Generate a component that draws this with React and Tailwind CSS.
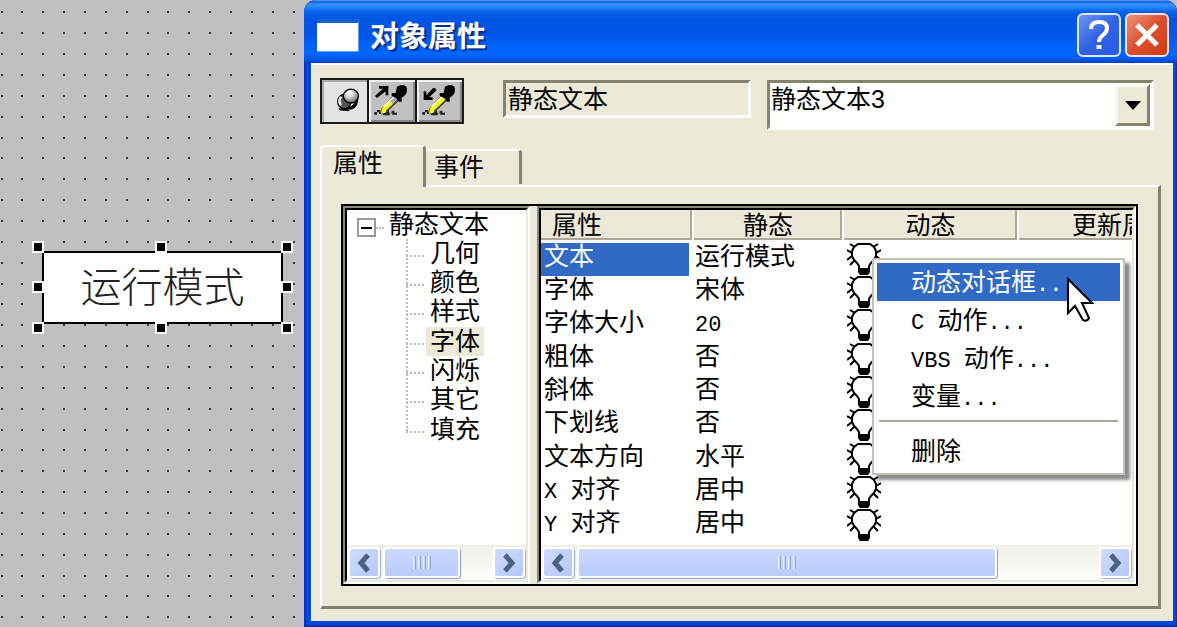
import { useState } from 'react';
import clsx from 'clsx';

const TREE_ITEMS = ['几何', '颜色', '样式', '字体', '闪烁', '其它', '填充'];

const ROWS = [
  ['文本', '运行模式'],
  ['字体', '宋体'],
  ['字体大小', '20'],
  ['粗体', '否'],
  ['斜体', '否'],
  ['下划线', '否'],
  ['文本方向', '水平'],
  ['X 对齐', '居中'],
  ['Y 对齐', '居中'],
];

const MENU_ITEMS = ['动态对话框...', 'C 动作...', 'VBS 动作...', '变量...'];

// latin runs are about half the width of a chinese character
function Mixed({ text }) {
  return text.split(/([\x20-\x7e]+)/).filter(Boolean).map((part, i) =>
    /^[\x20-\x7e]/.test(part) ? (
      <span key={i} className="whitespace-pre font-['Liberation_Mono',monospace] text-[22px]">{part}</span>
    ) : (
      <span key={i}>{part}</span>
    )
  );
}

function BulbIcon() {
  return (
    <svg width="34" height="32" viewBox="0 0 34 32" fill="none" stroke="#000" strokeWidth="2" aria-hidden="true">
      <path d="M11 1H23L27 4L29 8V13L27 17L24 20L22 23V26H12V23L10 20L7 17L5 13V8L7 4Z" fill="#fff" />
      <path d="M3 1L8 4M0 7L5 10M5 13L0 17M8 17L3 22M31 1L26 4M34 7L29 10M29 13L34 17M26 17L31 22" />
      <path d="M11 25h12v4l-2 3h-8l-2-3z" fill="#000" stroke="none" />
    </svg>
  );
}

function PinIcon() {
  return (
    <svg width="46" height="42" viewBox="0 0 138 126" aria-hidden="true">
      <defs>
        <radialGradient id="ball" cx="0.4" cy="0.3" r="0.7">
          <stop offset="0.1" stopColor="#fff" />
          <stop offset="0.5" stopColor="#c4c4c4" />
          <stop offset="1" stopColor="#666" />
        </radialGradient>
      </defs>
      <path d="M50 86l16-2 20 6-6 4-24-2z" fill="#111" />
      <ellipse cx="68" cy="65" rx="20" ry="22" fill="#555" stroke="#000" strokeWidth="4" />
      <path d="M58 50q-10 12 0 26" stroke="#e4e4e4" strokeWidth="8" fill="none" />
      <path d="M70 84q18 2 34-20l6-16q4 36-22 42z" fill="#000" />
      <ellipse cx="88" cy="48" rx="23" ry="21" fill="url(#ball)" stroke="#000" strokeWidth="4" />
    </svg>
  );
}

function DropperIcon({ down }) {
  return (
    <svg width="45" height="42" viewBox="0 0 135 126" aria-hidden="true">
      {down ? (
        <path d="M53 24l6 6-22 22h10v8H20V34h8v12l20-22z" fill="#000" />
      ) : (
        <path d="M30 18h28v28h-8V34L24 54l-6-6 24-22H30z" fill="#000" />
      )}
      <path d="M16 96h8v-6h10v6h8v6H30v-5h-6v7h-8zM42 98h10v-8h8v8h8v-6h8v6h8v6H70v-4h-8v6H42z" fill="#222" />
      <path d="M76 44l16 14-42 40-14 4 2-16z" fill={down ? '#ffff22' : '#aaa'} stroke="#222" strokeWidth="3" />
      <path d="M60 60l14 14-26 24-12 4 2-16z" fill="#f8f815" />
      <path d="M76 48L44 80" stroke="#fff" strokeWidth="4" />
      <path d="M90 57L52 94" stroke="#444" strokeWidth="4" />
      <path d="M84 20q8-6 18-5 12 2 12 14 0 12-10 20l-6 4v12h-8l-8-10-14-8v-8h12z" fill="#000" />
    </svg>
  );
}

function ToolButton({ label, pressed, children }) {
  return (
    <button
      type="button"
      aria-label={label}
      aria-pressed={pressed}
      className={clsx(
        'flex flex-1 items-center justify-center overflow-hidden',
        pressed
          ? 'bg-[#e4e4e4] shadow-[inset_2px_2px_0_#aaa]'
          : 'bg-[#c0c0c0] shadow-[inset_2px_2px_0_#f0f0f0,inset_-2px_-2px_0_#858585]'
      )}
    >
      {children}
    </button>
  );
}

function ScrollArrow({ left }) {
  return (
    <button
      type="button"
      aria-label={left ? '向左' : '向右'}
      className="flex h-[31px] w-[32px] shrink-0 items-center justify-center rounded-[4px] border-2 border-white bg-linear-to-br from-[#d0dcfe] to-[#b3c7f6] shadow-[1px_1px_1px_#8fa8d8]"
    >
      <svg width="14" height="20" viewBox="0 0 14 20" fill="none" stroke="#4d6185" strokeWidth="5" aria-hidden="true">
        <path d={left ? 'M11 2L4 10l7 8' : 'M3 2l7 8-7 8'} />
      </svg>
    </button>
  );
}

function ScrollBar({ thumb }) {
  return (
    <div className="flex h-[35px] shrink-0 items-center gap-[3px] bg-linear-to-b from-[#f0efe8] to-[#fefefb] px-[1px]">
      <ScrollArrow left />
      <div className="flex-1">
        <div className={clsx('flex h-[31px] items-center justify-center gap-[2px] rounded-[4px] border-2 border-white bg-linear-to-b from-[#cbd8ff] to-[#b9cbf9] shadow-[1px_1px_1px_#7f9bd0]', thumb)}>
          {[0, 1, 2, 3].map((i) => (
            <span key={i} className="h-[13px] w-[3px] border-r border-l border-r-[#8caae6] border-l-[#eef4fe]" />
          ))}
        </div>
      </div>
      <ScrollArrow />
    </div>
  );
}

// grid dots of the drawing area
function GridDots() {
  const dots = [];
  for (let row = 0; row < 60; row++) {
    for (let col = 0; col < 15; col++) {
      dots.push(<rect key={`${row}-${col}`} x={Math.round(0.6 + col * 20.86)} y={Math.round(11.4 + row * 20.86)} width="2" height="2" />);
    }
  }
  return (
    <svg className="absolute inset-0 h-full w-full" fill="#3a3a3a" aria-hidden="true">
      {dots}
    </svg>
  );
}

const HANDLES = [
  'left-[-12px] top-[-12px]',
  'left-[111px] top-[-12px]',
  'right-[-12px] top-[-12px]',
  'left-[-12px] top-[28px]',
  'right-[-12px] top-[28px]',
  'left-[-12px] bottom-[-12px]',
  'left-[111px] bottom-[-12px]',
  'right-[-12px] bottom-[-12px]',
];

function Canvas() {
  return (
    <div className="relative w-[304px] shrink-0 overflow-hidden">
      <GridDots />
      <div className="absolute top-[251px] left-[42px] flex h-[73px] w-[241px] items-center justify-center border-2 border-black bg-white">
        <span className="text-[41px] leading-[60px] font-light text-[#222]">运行模式</span>
        {HANDLES.map((pos) => (
          <span key={pos} className={clsx('absolute h-[12px] w-[12px] border-2 border-white bg-black', pos)} />
        ))}
      </div>
    </div>
  );
}

function TitleBar() {
  return (
    <header className="flex h-[63px] shrink-0 items-center rounded-t-[12px] bg-[linear-gradient(180deg,#6f9be8_0px,#0a5fe0_2px,#3a94ff_4px,#2585fb_7px,#0560ea_12px,#0054e3_20px,#0056e8_36px,#0064fc_46px,#0066ff_54px,#0058ee_59px,#0040c8_63px)] pt-[7px] pr-[8px] pl-[13px]">
      <span className="h-[33px] w-[42px] border-t-4 border-r border-b border-t-[#1262c8] border-r-[#5f9cf0] border-b-[#5f9cf0] bg-white" />
      <h1 className="flex-1 pt-[4px] pl-[11px] text-[29px] leading-[40px] font-bold text-white [text-shadow:2px_2px_1px_#0a2f8a]">对象属性</h1>
      <div className="flex gap-[4px]">
        <button
          type="button"
          aria-label="帮助"
          className="flex h-[44px] w-[44px] items-center justify-center rounded-[6px] border-2 border-[#dfe8ff] bg-linear-to-br from-[#6f95f3] via-[#3063e4] to-[#2a5ce8]"
        >
          <svg width="24" height="30" viewBox="0 0 24 30" fill="none" stroke="#fff" strokeWidth="4" aria-hidden="true">
            <path d="M4 9q0-7 8-7 8 0 8 6 0 4-4 7-4 3-4 7" />
            <path d="M12 25v4" strokeWidth="5" />
          </svg>
        </button>
        <button
          type="button"
          aria-label="关闭"
          className="flex h-[44px] w-[44px] items-center justify-center rounded-[6px] border-2 border-[#f5e2e4] bg-linear-to-br from-[#ec9078] via-[#dd4f2c] to-[#cf3c10]"
        >
          <svg width="26" height="26" viewBox="0 0 26 26" stroke="#fff" strokeWidth="5" aria-hidden="true">
            <path d="M3 3l20 20M23 3L3 23" />
          </svg>
        </button>
      </div>
    </header>
  );
}

function Toolbar() {
  return (
    <div className="mr-[7px] flex h-[52px] items-start">
      <div className="flex h-[46px] w-[144px] shrink-0 gap-[2px] bg-[#1c1c1c] p-[2px]">
        <ToolButton label="固定" pressed><PinIcon /></ToolButton>
        <ToolButton label="复制属性"><DropperIcon /></ToolButton>
        <ToolButton label="分配属性"><DropperIcon down /></ToolButton>
      </div>
      <input
        readOnly
        aria-label="对象类型"
        value="静态文本"
        className="mt-[2px] ml-[39px] h-[38px] w-[248px] shrink-0 border-3 border-t-[#85836f] border-r-white border-b-white border-l-[#85836f] bg-[#ece9d8] pb-[4px] pl-[2px] text-[25px] leading-[28px] outline-none"
      />
      <div className="relative mt-[2px] ml-[16px] h-[50px] min-w-0 flex-1">
        <select
          aria-label="对象名称"
          className="h-full w-full appearance-none border-3 border-t-[#85836f] border-r-white border-b-white border-l-[#85836f] bg-white pb-[12px] pl-[1px] text-[25px] leading-[32px] outline-none"
        >
          <option>静态文本3</option>
        </select>
        <span className="pointer-events-none absolute top-[4px] right-[4px] flex h-[42px] w-[35px] items-center justify-center border-3 border-t-[#f8f7f0] border-r-[#85836f] border-b-[#85836f] border-l-[#f8f7f0] bg-[#ece9d8]">
          <svg width="16" height="9" viewBox="0 0 16 9" aria-hidden="true"><path d="M0 0h16L8 9z" /></svg>
        </span>
      </div>
    </div>
  );
}

const paneClass = 'flex flex-col overflow-hidden border-2 border-t-[#8a887c] border-l-[#8a887c] border-b-white border-r-white';
const paneInnerClass = 'flex min-h-0 flex-1 flex-col overflow-hidden border-2 border-t-black border-l-black border-b-[#ece9d8] border-r-[#ece9d8] bg-white';

function TreePane({ current, onSelect }) {
  return (
    <div className={clsx(paneClass, 'w-[187px] shrink-0')}>
      <div className={paneInnerClass}>
        <div className="flex-1 overflow-hidden">
          <div className="flex h-[29px] items-start pl-[10px]">
            <button type="button" aria-label="折叠" className="mt-[8px] flex h-[19px] w-[19px] items-center justify-center border-2 border-[#9a9a9a] bg-white">
              <span className="h-[2px] w-[11px] bg-black" />
            </button>
            <span className="mt-[17px] w-[8px] border-t-2 border-dotted border-[#bbb]" />
            <span className="ml-[5px] leading-[29px]">静态文本</span>
          </div>
          <ul className="relative ml-[59px] before:absolute before:top-0 before:bottom-[13px] before:left-0 before:border-l-2 before:border-dotted before:border-[#bbb]">
            {TREE_ITEMS.map((item) => (
              <li key={item} className="flex h-[29px] items-start nth-[3n]:h-[30px] before:mt-[16px] before:mr-[2px] before:w-[18px] before:border-t-2 before:border-dotted before:border-[#bbb]">
                <button
                  type="button"
                  onClick={() => onSelect(item)}
                  className={clsx('px-[4px] leading-[29px]', item === current && 'bg-[#ece9d8]')}
                >
                  {item}
                </button>
              </li>
            ))}
          </ul>
        </div>
        <ScrollBar thumb="w-[72%]" />
      </div>
    </div>
  );
}

function PropertyTable() {
  const th = 'h-[33px] border-b-3 border-white bg-[#ece9d8] p-0 font-normal leading-[30px] shadow-[inset_-2px_-2px_0_#aca899]';
  return (
    <div className={clsx(paneClass, 'min-w-0 flex-1')}>
      <div className={paneInnerClass}>
        <div className="flex-1 overflow-hidden">
          <table className="w-[684px] table-fixed border-separate border-spacing-0">
            <thead>
              <tr>
                <th className={clsx(th, 'w-[151px] pl-[11px] text-left')}>属性</th>
                <th className={clsx(th, 'w-[150px] border-l-2')}>静态</th>
                <th className={clsx(th, 'w-[175px] border-l-2')}>动态</th>
                <th className={clsx(th, 'w-[208px] border-l-2')}>更新周期</th>
              </tr>
            </thead>
            <tbody>
              {ROWS.map(([name, value], i) => (
                <tr key={name} className="h-[33px] align-top nth-[3n]:h-[34px]">
                  <td className="p-0">
                    <div className={clsx('mr-[3px] h-[33px] pl-[3px] leading-[26px]', i === 0 && 'bg-[#316ac5] text-white')}>
                      <Mixed text={name} />
                    </div>
                  </td>
                  <td className="p-0 pl-[3px] leading-[26px]"><Mixed text={value} /></td>
                  <td className="p-0 pl-[5px]"><BulbIcon /></td>
                  <td className="p-0" />
                </tr>
              ))}
            </tbody>
          </table>
        </div>
        <ScrollBar thumb="w-[81%]" />
      </div>
    </div>
  );
}

function ContextMenu() {
  return (
    <div role="menu" className="absolute top-[52px] left-[529px] w-[253px] border-2 border-[#c5c2b8] bg-white px-[3px] pt-[3px] pb-[3px] shadow-[5px_5px_3px_rgba(0,0,0,0.45)]">
      {MENU_ITEMS.map((item, i) => (
        <button
          key={item}
          type="button"
          role="menuitem"
          className={clsx('flex h-[38px] w-full items-baseline pl-[34px] leading-[38px]', i === 0 && 'bg-[#316ac5] text-white')}
        >
          <Mixed text={item} />
        </button>
      ))}
      <hr className="mx-[2px] mt-[5px] mb-[10px] border-t-2 border-[#aca899]" />
      <button type="button" role="menuitem" className="flex h-[38px] w-full items-baseline pl-[34px] leading-[38px]">删除</button>
      <svg className="absolute top-[17px] left-[192px]" width="28" height="46" viewBox="0 0 28 46" aria-hidden="true">
        <path d="M2 2v34l7-7 8 14q4 2 6-2l-7-15h10z" fill="#fff" stroke="#000" strokeWidth="2" />
      </svg>
    </div>
  );
}

export default function App() {
  const [group, setGroup] = useState('字体');

  return (
    <div className="flex h-screen min-h-[627px] overflow-hidden bg-[#c0c0c0] font-['Liberation_Sans','Noto_Sans_CJK_SC',sans-serif] text-[25px] text-black">
      <Canvas />
      <main className="flex min-w-0 flex-1 flex-col rounded-t-[12px] bg-[#0047dc] pb-[6px] shadow-[inset_2px_0_0_#0a2fc8,inset_-1px_-2px_0_#0a2fb8]">
        <TitleBar />
        <div className="mr-[4px] ml-[7px] flex min-h-0 flex-1 flex-col border-t-2 border-l border-[#fbfaf4] bg-[#ece9d8] pt-[13px] pr-[12px] pb-[12px] pl-[8px]">
          <Toolbar />
          <div role="tablist" className="mt-[15px] flex h-[40px] shrink-0 items-start">
            <button
              type="button"
              role="tab"
              aria-selected="true"
              className="z-10 h-[42px] w-[106px] rounded-t-[4px] border-t-2 border-r-3 border-l-2 border-t-white border-r-[#85836f] border-l-white bg-[#ece9d8] pb-[8px] pl-[11px] text-left leading-[32px]"
            >
              属性
            </button>
            <button
              type="button"
              role="tab"
              aria-selected="false"
              className="mt-[4px] h-[35px] w-[96px] rounded-t-[4px] border-t-2 border-r-3 border-t-white border-r-[#85836f] pb-[1px] pl-[8px] text-left leading-[32px]"
            >
              事件
            </button>
          </div>
          <section className="flex min-h-0 flex-1 flex-col border-t-2 border-r-3 border-b-3 border-l-2 border-t-white border-r-[#85836f] border-b-[#85836f] border-l-white pt-[17px] pr-[20px] pb-[20px] pl-[19px]">
            <div className="relative flex min-h-0 flex-1 gap-[7px] border-2 border-black">
              <TreePane current={group} onSelect={setGroup} />
              <PropertyTable />
              <ContextMenu />
            </div>
          </section>
        </div>
      </main>
    </div>
  );
}
